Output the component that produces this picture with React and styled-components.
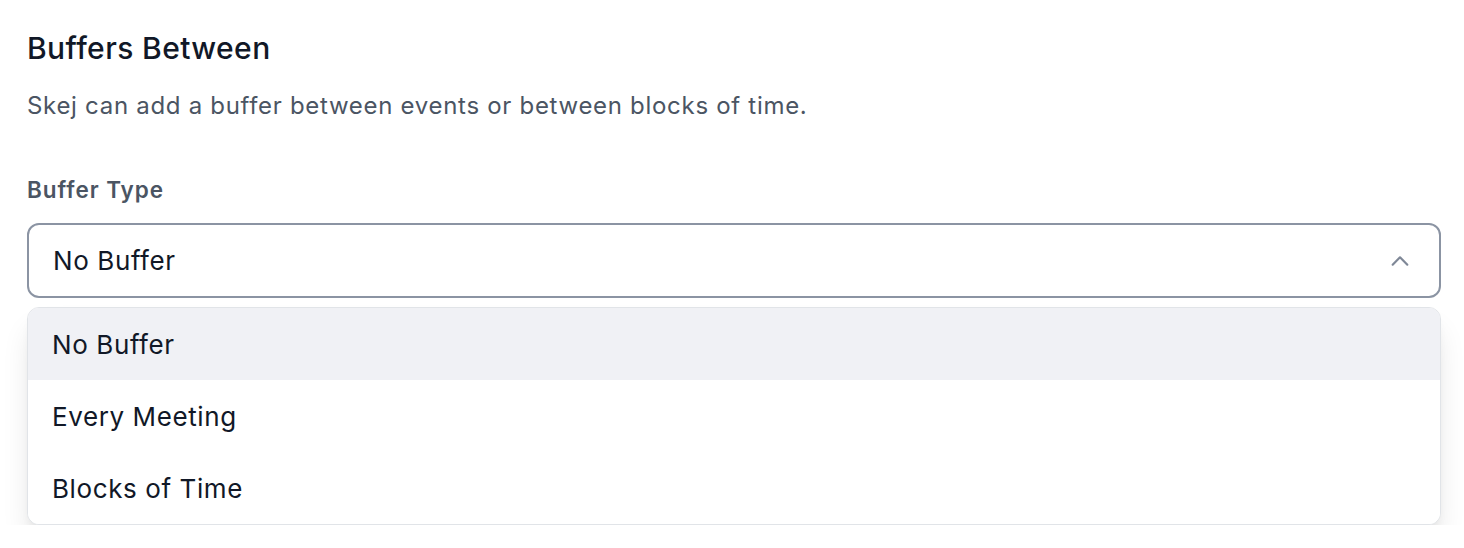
import React from 'react';
import styled, { createGlobalStyle } from 'styled-components';

const GlobalStyle = createGlobalStyle`
  body {
    margin: 0;
    background: #fff;
    font-family: Inter, "Noto Sans", "Liberation Sans", sans-serif;
    -webkit-font-smoothing: antialiased;
  }
`;

const Section = styled.section`
  padding: 28px 23px 0 27px;
`;

const Title = styled.h2`
  margin: 0;
  font-size: 30px;
  line-height: 40px;
  font-weight: 500;
  letter-spacing: 0.4px;
  color: #111827;
`;

const Description = styled.p`
  margin: 20px 0 0;
  font-size: 24px;
  line-height: 36px;
  letter-spacing: 0.7px;
  color: #4b5563;
`;

const Label = styled.label`
  display: block;
  margin-top: 50px;
  font-size: 22.5px;
  line-height: 32px;
  font-weight: 600;
  letter-spacing: 0.95px;
  color: #4b5563;
`;

const Field = styled.div`
  position: relative;
  margin-top: 17px;
`;

const Trigger = styled.button`
  display: flex;
  align-items: center;
  justify-content: space-between;
  width: 100%;
  height: 75px;
  padding: 0 28px 0 24px;
  background: #fff;
  border: 2px solid #8b94a3;
  border-radius: 12px;
  font-family: inherit;
  font-size: 26px;
  letter-spacing: 0.6px;
  color: #111827;
  text-align: left;
  cursor: pointer;
`;

const Menu = styled.ul`
  list-style: none;
  margin: 9px 0 0;
  padding: 0;
  background: #fff;
  border: 1px solid #e1e4e8;
  border-radius: 12px;
  overflow: hidden;
  box-shadow: 0 20px 30px -5px rgba(0, 0, 0, 0.12), 0 8px 12px -6px rgba(0, 0, 0, 0.1);
`;

const Option = styled.li`
  display: flex;
  align-items: center;
  height: 72px;
  padding: 0 24px;
  font-size: 26px;
  letter-spacing: 0.6px;
  color: #111827;
  background: ${({ active }) => (active ? '#f0f1f5' : '#fff')};
`;

const Chevron = () => (
  <svg width="22" height="22" viewBox="0 0 24 24" fill="none" stroke="#7f8897" strokeWidth="2.4" strokeLinecap="round" strokeLinejoin="round">
    <path d="M4 16l8-8 8 8" />
  </svg>
);

const options = ['No Buffer', 'Every Meeting', 'Blocks of Time'];

export default function App() {
  return (
    <>
      <GlobalStyle />
      <Section>
        <Title>Buffers Between</Title>
        <Description>Skej can add a buffer between events or between blocks of time.</Description>
        <Label>Buffer Type</Label>
        <Field>
          <Trigger>
            No Buffer
            <Chevron />
          </Trigger>
          <Menu>
            {options.map((o, i) => (
              <Option key={o} active={i === 0}>{o}</Option>
            ))}
          </Menu>
        </Field>
      </Section>
    </>
  );
}
